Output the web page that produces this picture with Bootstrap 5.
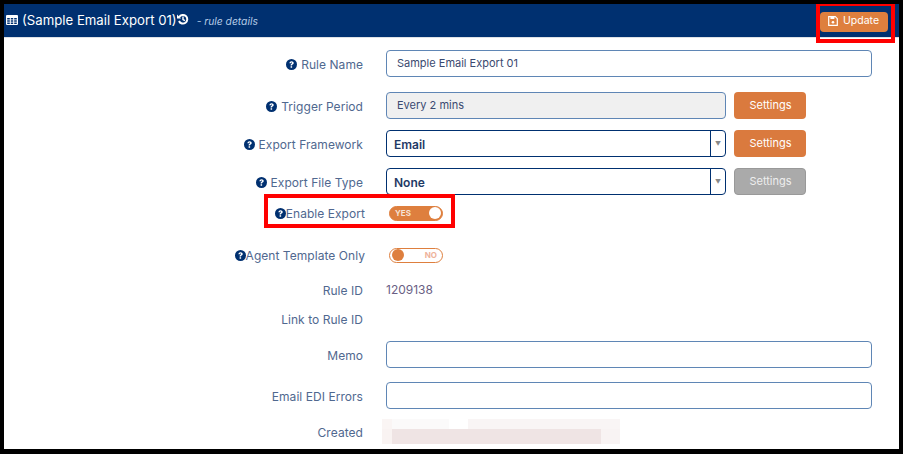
<!DOCTYPE html>
<html lang="en"><head><meta charset="utf-8"><title>Rule details</title>
<link rel="stylesheet" href="https://cdn.jsdelivr.net/npm/bootstrap@5.3.0/dist/css/bootstrap.min.css">
<style>
html,body{height:454px;overflow:hidden}
body{background:#000;font-family:Inter,"Liberation Sans",sans-serif;font-size:12px;color:#4a6190}
.frame{position:relative;margin:4px 4px 5px 4px;height:445px;background:#fff;overflow:hidden}
.head{height:33px;background:#003070;color:#fff;padding:0 11px 0 2px}
.headline{font-size:13.2px}
.sub{font-size:10.3px;font-style:italic;color:#b5cbe6;margin-left:8px;margin-top:3px}
.updbtn{background:#de7f3e;color:#fff;font-size:10.5px;height:20px;width:68px;border-radius:4px;border:0;padding:0 1px 1px 0;margin-top:2px;display:flex;align-items:center;justify-content:center;gap:5px}
.body-area{padding-top:12px;border-top:1px solid #dde1e6}
.frow{display:flex;align-items:center;min-height:27px}
.lab{width:359px;flex:none;text-align:right;color:#50688f;font-size:12px;white-space:nowrap;letter-spacing:.05px;padding-top:2px}
.lab-wide{width:361px}
.ctl{margin-left:23px;flex:none}
.txt{height:27px;border:1px solid #5f86b5;border-radius:4px;font-size:11px;color:#3a4a70;padding:0 10px 1px;display:flex;align-items:center;width:486px;background:#fff}
.ro{width:340px;background:#f0f0f0}
.sel{width:340px;height:27px;border:1px solid #003070;border-radius:4px;display:flex;font-weight:600;font-size:12px;background:#fff}
.seltxt{flex:1;padding:2px 0 0 7px;display:flex;align-items:center;border-right:1px solid #003070;color:#1f3a66}
.arrow{width:14px;display:flex;align-items:center;justify-content:center;color:#888;font-size:6px;font-weight:400}
.setbtn{margin-left:8px;width:72px;height:27px;border-radius:4px;background:#da7a3e;color:#fff;font-size:11px;border:0;padding:0 0 1px 1px;display:flex;align-items:center;justify-content:center}
.setoff{background:#aaa;color:#eee;border:1px solid #999}
.tog{width:54px;height:15px;border-radius:8px;border:1px solid #de7f3e;margin-left:24px;display:flex;align-items:center;justify-content:space-between;padding:0 1px 0 5px;font-size:8px;font-weight:700}
.on{background:#de7f3e;color:#f6e3d6}
.off{color:#eeb29a;padding:0 5px 0 2px;background:#fff}
.knob{width:12px;height:12px;border-radius:50%;background:#fff;flex:none}
.off .knob{background:#de7f3e}
.q{display:inline-block;vertical-align:-1px}
.val{color:#6a6084}
.blur{width:238px;height:25px;margin-left:19px;background:linear-gradient(90deg,#f9f3f2 0 10px,#efe4e4 10px 219px,#f8f3f3 219px 100%) 0 100%/100% 15px no-repeat,linear-gradient(90deg,#faf5f4 0 10px,#fbfafa 10px 67px,#fff 67px 86px,#f9f5f5 86px 100%) 0 0/100% 10px no-repeat}
.redbox{position:absolute;border:4px solid #f00;pointer-events:none}
.rb1{left:812px;top:-2px;width:79px;height:41px}
.rb2{left:260px;top:190px;width:191px;height:34px}
.mt-a{margin-top:15px}.mt-b{margin-top:11px}
.row-en{margin-top:8px;min-height:15px}
.row-ag{margin-top:22px;min-height:15px}
.row-id{margin-top:15px;min-height:14px}
.row-ln{margin-top:9px;min-height:14px}
.row-me{margin-top:12px}
.row-ed{margin-top:14px}
.row-cr{margin-top:10px;min-height:25px}
.gap-q{margin-right:4px}
.ic-hist{margin-top:-2px}
</style></head><body>
<svg width="0" height="0" class="position-absolute"><defs>
<symbol id="qi" viewBox="0 0 16 16"><circle cx="8" cy="8" r="8" fill="#003070"/><path d="M4.9 6.1C5 4.2 6.4 3.2 8.1 3.2c1.8 0 3.1 1.1 3.1 2.6 0 1.2-.7 1.8-1.5 2.3-.6.4-.8.6-.8 1.1v.4H6.7V9c0-1 .4-1.6 1.2-2.1.6-.4.9-.6.9-1 0-.5-.3-.7-.8-.7-.6 0-.9.4-1 1z" fill="#fff"/><rect x="6.7" y="10.5" width="2.2" height="2.2" fill="#fff"/></symbol>
</defs></svg>
<div class="frame">
  <div class="head d-flex align-items-center justify-content-between">
    <div class="d-flex align-items-center">
      <svg width="12" height="10" viewBox="0 0 12 11" preserveAspectRatio="none" class="me-1"><path fill="#fff" fill-rule="evenodd" d="M1 0h10a1 1 0 0 1 1 1v9a1 1 0 0 1-1 1H1a1 1 0 0 1-1-1V1a1 1 0 0 1 1-1zm.2 3.2v1.7h2.6V3.2zm3.6 0v1.7h2.4V3.2zm3.4 0v1.7h2.6V3.2zM1.2 5.8v1.6h2.6V5.8zm3.6 0v1.6h2.4V5.8zm3.4 0v1.6h2.6V5.8zM1.2 8.3v1.6h2.6V8.3zm3.6 0v1.6h2.4V8.3zm3.4 0v1.6h2.6V8.3z"/></svg>
      <span class="headline">(Sample Email Export 01)</span>
      <svg class="ic-hist" width="12" height="12" viewBox="0 0 12 12"><path d="M2.2 4.2A4.3 4.3 0 1 1 2 8" fill="none" stroke="#fff" stroke-width="2"/><path d="M0 1.5v4h4z" fill="#fff"/><path d="M6 3.5v3l2 1.2" fill="none" stroke="#fff" stroke-width="1.4"/></svg>
      <span class="sub">- rule details</span>
    </div>
    <button class="updbtn" type="button"><svg width="10" height="10" viewBox="0 0 10 10"><path fill="none" stroke="#fff" stroke-width="1.2" d="M.7.7h6.6l2 2v6.6H.7z"/><rect x="2.4" y="1" width="4" height="2" fill="#fff"/><circle cx="5" cy="6.2" r="1.3" fill="#fff"/></svg>Update</button>
  </div>
  <div class="body-area">
    <div class="frow"><div class="lab"><svg class="q gap-q" width="11" height="11"><use href="#qi"/></svg>Rule Name</div><div class="ctl txt">Sample Email Export 01</div></div>
    <div class="frow mt-a"><div class="lab"><svg class="q gap-q" width="11" height="11"><use href="#qi"/></svg>Trigger Period</div><div class="ctl txt ro">Every 2 mins</div><button class="setbtn" type="button">Settings</button></div>
    <div class="frow mt-b"><div class="lab"><svg class="q gap-q" width="11" height="11"><use href="#qi"/></svg>Export Framework</div><div class="ctl sel"><div class="seltxt">Email</div><div class="arrow">▼</div></div><button class="setbtn" type="button">Settings</button></div>
    <div class="frow mt-b"><div class="lab"><svg class="q gap-q" width="11" height="11"><use href="#qi"/></svg>Export File Type</div><div class="ctl sel"><div class="seltxt">None</div><div class="arrow">▼</div></div><button class="setbtn setoff" type="button">Settings</button></div>
    <div class="frow row-en"><div class="lab lab-wide"><svg class="q" width="11" height="11"><use href="#qi"/></svg>Enable Export</div><div class="tog on"><span>YES</span><span class="knob"></span></div></div>
    <div class="frow row-ag"><div class="lab lab-wide"><svg class="q" width="11" height="11"><use href="#qi"/></svg>Agent Template Only</div><div class="tog off"><span class="knob"></span><span>NO</span></div></div>
    <div class="frow row-id"><div class="lab">Rule ID</div><div class="ctl val">1209138</div></div>
    <div class="frow row-ln"><div class="lab">Link to Rule ID</div></div>
    <div class="frow row-me"><div class="lab">Memo</div><div class="ctl txt"></div></div>
    <div class="frow row-ed"><div class="lab">Email EDI Errors</div><div class="ctl txt"></div></div>
    <div class="frow row-cr"><div class="lab">Created</div><div class="blur"></div></div>
  </div>
  <div class="redbox rb1"></div>
  <div class="redbox rb2"></div>
</div>
</body></html>
